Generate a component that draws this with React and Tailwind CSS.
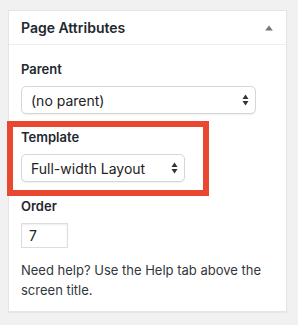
function UpDownArrows() {
  return (
    <svg width="7" height="12" viewBox="0 0 7 12" className="shrink-0">
      <path d="M3.5 0.5 L6.5 5 L0.5 5 Z" fill="#333" />
      <path d="M3.5 11.5 L6.5 7 L0.5 7 Z" fill="#333" />
    </svg>
  )
}

function FakeSelect({ value, width }) {
  return (
    <div
      className={`${width} h-[28px] flex items-center justify-between pl-[9px] pr-[6px] bg-white border border-[#d6d6d6] rounded-[5px] shadow-[0_1px_1px_rgba(0,0,0,0.06)] text-[14px] text-[#222]`}
    >
      <span>{value}</span>
      <UpDownArrows />
    </div>
  )
}

export default function App() {
  return (
    <div
      className="min-h-[325px] bg-[#f1f1f1] pt-[10px] px-[8px] pb-[11px]"
      style={{ fontFamily: 'Inter, "Liberation Sans", sans-serif' }}
    >
      <div className="w-[279px] bg-white border border-[#e5e5e5] shadow-[0_1px_1px_rgba(0,0,0,0.04)]">
        {/* Header */}
        <div className="h-[34px] flex items-center justify-between pl-[12px] pr-[13px] border-b border-[#eee]">
          <h2 className="text-[14px] font-semibold text-[#23282d]">Page Attributes</h2>
          <svg width="8" height="6" viewBox="0 0 8 6">
            <path d="M4 0.5 L7.8 5.5 L0.2 5.5 Z" fill="#72777c" />
          </svg>
        </div>

        <div className="px-[12px] pb-[11px] text-[#23282d]">
          {/* Parent */}
          <p className="mt-[15px] text-[13px] leading-[18px] font-semibold">Parent</p>
          <div className="mt-[8px]">
            <FakeSelect value="(no parent)" width="w-[235px]" />
          </div>

          {/* Template, outlined in red */}
          <div className="mt-[7px] -ml-[14px] w-[202px] border-[6px] border-[#e9472f] pl-[8px] pt-[1px] pb-[8px]">
            <p className="text-[13px] leading-[18px] font-semibold">Template</p>
            <div className="mt-[8px]">
              <FakeSelect value="Full-width Layout" width="w-[164px]" />
            </div>
          </div>

          {/* Order */}
          <p className="mt-[1px] text-[13px] leading-[18px] font-semibold">Order</p>
          <div className="mt-[8px] w-[47px] h-[25px] flex items-center pl-[7px] border border-[#ddd] shadow-[inset_0_1px_2px_rgba(0,0,0,0.07)] text-[14px] text-[#222]">
            7
          </div>

          <p className="mt-[13px] text-[13px] leading-[19.5px] text-[#32373c]">
            Need help? Use the Help tab above the screen title.
          </p>
        </div>
      </div>
    </div>
  )
}
